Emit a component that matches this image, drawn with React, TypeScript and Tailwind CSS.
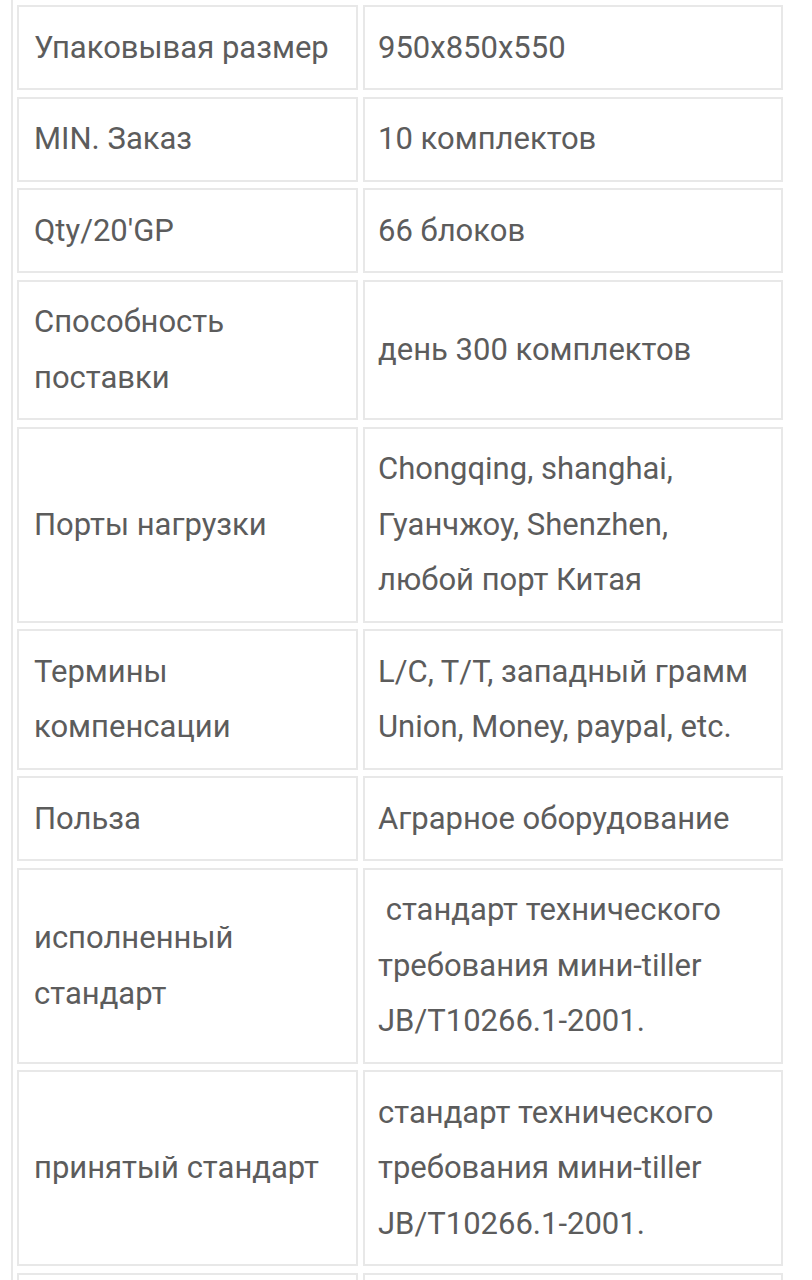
import React from "react";

type Row = { k: React.ReactNode; v: React.ReactNode };

const rows: Row[] = [
  { k: "Упаковывая размер", v: "950x850x550" },
  { k: "MIN. Заказ", v: "10 комплектов" },
  { k: "Qty/20'GP", v: "66 блоков" },
  { k: <>Способность<br />поставки</>, v: "день 300 комплектов" },
  {
    k: "Порты нагрузки",
    v: <>Chongqing, shanghai,<br />Гуанчжоу, Shenzhen,<br />любой порт Китая</>,
  },
  {
    k: <>Термины<br />компенсации</>,
    v: <>L/C, T/T, западный грамм<br />Union, Money, paypal, etc.</>,
  },
  { k: "Польза", v: "Аграрное оборудование" },
  {
    k: <>исполненный<br />стандарт</>,
    v: <>{"\u00a0"}стандарт технического<br />требования мини-tiller<br />JB/T10266.1-2001.</>,
  },
  {
    k: "принятый стандарт",
    v: <>стандарт технического<br />требования мини-tiller<br />JB/T10266.1-2001.</>,
  },
  { k: "\u00a0", v: "\u00a0" },
];

export default function App() {
  return (
    <div
      className="min-h-[1280px] bg-white text-[#5c5c5c]"
      style={{ fontFamily: "Roboto, 'Noto Sans', sans-serif" }}
    >
      <div className="ml-[11px] w-[773px] border-l-2 border-[#e8e8e8] pl-[4px] pt-[5px] flex flex-col gap-[6.5px]">
        {rows.map((r, i) => (
          <div key={i} className="grid grid-cols-[341px_420px] gap-x-[5px]">
            <div className="flex items-center border-2 border-[#e8e8e8] px-[15px] py-[12.75px] text-[31px] leading-[55.5px]">
              <div>{r.k}</div>
            </div>
            <div className="flex items-center border-2 border-[#e8e8e8] px-[13px] py-[12.75px] text-[31px] leading-[55.5px]">
              <div className="whitespace-nowrap">{r.v}</div>
            </div>
          </div>
        ))}
      </div>
    </div>
  );
}
